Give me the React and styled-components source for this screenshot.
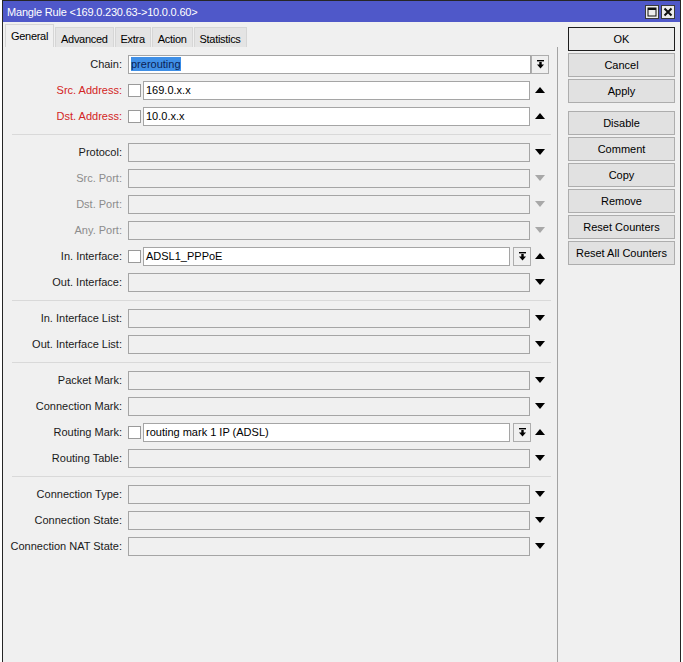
import React from "react";
import styled, { createGlobalStyle } from "styled-components";

const GlobalStyle = createGlobalStyle`
  html, body { margin: 0; padding: 0; background: #ffffff; }
  body { font-family: "Liberation Sans", Arial, sans-serif; font-size: 11px; color: #000; }
  * { box-sizing: border-box; }
`;

const Window = styled.div`
  margin-left: 2px;
  width: 679px;
  height: 662px;
  border: 1px solid #262626;
  border-bottom: none;
  background: #f0f0f0;
  display: flex;
  flex-direction: column;
  overflow: hidden;
`;

const TitleBar = styled.div`
  height: 21px;
  background: #4f58c9;
  display: flex;
  align-items: center;
  padding: 0 5px 0 4px;
  color: #ffffff;
  font-size: 11px;
  letter-spacing: -0.2px;
`;

const TitleText = styled.div`
  flex: 1;
  white-space: nowrap;
`;

const TitleButton = styled.div`
  width: 14px;
  height: 14px;
  margin-left: 2px;
  border: 1px solid #3a3a3a;
  background: #ececec;
  display: flex;
  align-items: center;
  justify-content: center;
`;

const Body = styled.div`
  flex: 1;
  display: flex;
  min-height: 0;
`;

const LeftPane = styled.div`
  width: 555px;
  display: flex;
  flex-direction: column;
`;

const TabStrip = styled.div`
  height: 25px;
  padding: 2px 0 0 2px;
  display: flex;
  align-items: flex-end;
`;

const Tab = styled.div`
  height: ${(p) => (p.$active ? "23px" : "20px")};
  padding: 0 ${(p) => p.$pad}px;
  padding-top: 2px;
  margin-right: 1px;
  display: flex;
  align-items: center;
  background: ${(p) => (p.$active ? "#f0f0f0" : "#e4e4e4")};
  border: 1px solid #d6d6d6;
  border-bottom: none;
  padding-bottom: ${(p) => (p.$active ? "3px" : "0")};
  color: #000;
  white-space: nowrap;
  letter-spacing: -0.3px;
`;

const Form = styled.div`
  flex: 1;
  border-right: 1px solid #a3a3a3;
  padding-top: 4px;
  display: flex;
  flex-direction: column;
`;

const Row = styled.div`
  height: 26px;
  display: grid;
  grid-template-columns: 125px 403px 18px;
  align-items: center;
`;

const Label = styled.div`
  text-align: right;
  padding-right: 6px;
  white-space: nowrap;
  color: ${(p) => (p.$tone === "red" ? "#d32424" : p.$tone === "gray" ? "#8c8c8c" : "#1a1a1a")};
`;

const FieldArea = styled.div`
  display: flex;
  align-items: center;
  gap: 2px;
  height: 19px;
`;

const Box = styled.div`
  flex: 1;
  height: 19px;
  margin-right: ${(p) => (p.$inset ? "0" : "1px")};
  border: 1px solid #a5a5a5;
  background: ${(p) => (p.$filled ? "#ffffff" : "#f0f0f0")};
  display: flex;
  align-items: center;
  padding-left: 2px;
  white-space: nowrap;
  overflow: hidden;
  color: #000;
`;

const Selected = styled.span`
  background: #3f8fe6;
  color: #0c1f55;
  padding: 1px 0;
`;

const Check = styled.div`
  width: 13px;
  height: 13px;
  border: 1px solid #9a9a9a;
  background: #ffffff;
  flex: none;
`;

const DropButton = styled.div`
  width: 18px;
  height: 19px;
  flex: none;
  border: 1px solid #adadad;
  background: #f0f0f0;
  display: flex;
  align-items: center;
  justify-content: center;
`;

const ArrowCell = styled.div`
  display: flex;
  align-items: center;
  justify-content: center;
  height: 19px;
`;

const Separator = styled.div`
  height: 10px;
  margin: 0 6px 0 9px;
  display: flex;
  align-items: center;
  &::after {
    content: "";
    display: block;
    width: 100%;
    height: 1px;
    background: #d9d9d9;
  }
`;

const SidePanel = styled.div`
  width: 122px;
  padding: 5px 0 0 10px;
  display: flex;
  flex-direction: column;
`;

const Button = styled.div`
  width: 107px;
  height: 24px;
  margin-bottom: ${(p) => (p.$gapAfter ? "8px" : "2px")};
  border: 1px solid ${(p) => (p.$default ? "#1e1e1e" : "#adadad")};
  background: ${(p) => (p.$default ? "#ececec" : "#e1e1e1")};
  display: flex;
  align-items: center;
  justify-content: center;
  color: #000;
  white-space: nowrap;
`;

const Triangle = ({ dir, disabled }) => (
  <svg width="10" height="6" viewBox="0 0 10 6">
    <polygon
      points={dir === "up" ? "0,6 5,0 10,6" : "0,0 10,0 5,6"}
      fill={disabled ? "#a8a8a8" : "#000"}
    />
  </svg>
);

const DropIcon = () => (
  <svg width="9" height="9" viewBox="0 0 9 9">
    <rect x="1" y="0" width="7" height="1.4" fill="#000" />
    <rect x="3.3" y="2" width="2.4" height="3" fill="#000" />
    <polygon points="1,4.5 8,4.5 4.5,8.5" fill="#000" />
  </svg>
);

const MaxIcon = () => (
  <svg width="10" height="10" viewBox="0 0 10 10">
    <rect x="1" y="1" width="8" height="8" fill="none" stroke="#111" strokeWidth="1" />
    <rect x="1" y="1" width="8" height="2" fill="#111" />
  </svg>
);

const CloseIcon = () => (
  <svg width="10" height="10" viewBox="0 0 10 10">
    <path d="M1.5 1.5 L8.5 8.5 M8.5 1.5 L1.5 8.5" stroke="#111" strokeWidth="2" />
  </svg>
);

const rows = [
  { label: "Chain", kind: "chain", value: "prerouting" },
  { label: "Src. Address", tone: "red", check: true, value: "169.0.x.x", arrow: "up" },
  { label: "Dst. Address", tone: "red", check: true, value: "10.0.x.x", arrow: "up" },
  "sep",
  { label: "Protocol", arrow: "down" },
  { label: "Src. Port", tone: "gray", arrow: "down", disabled: true },
  { label: "Dst. Port", tone: "gray", arrow: "down", disabled: true },
  { label: "Any. Port", tone: "gray", arrow: "down", disabled: true },
  { label: "In. Interface", check: true, value: "ADSL1_PPPoE", drop: true, arrow: "up" },
  { label: "Out. Interface", arrow: "down" },
  "sep",
  { label: "In. Interface List", arrow: "down" },
  { label: "Out. Interface List", arrow: "down" },
  "sep",
  { label: "Packet Mark", arrow: "down" },
  { label: "Connection Mark", arrow: "down" },
  { label: "Routing Mark", check: true, value: "routing mark 1 IP (ADSL)", drop: true, arrow: "up" },
  { label: "Routing Table", arrow: "down" },
  "sep",
  { label: "Connection Type", arrow: "down" },
  { label: "Connection State", arrow: "down" },
  { label: "Connection NAT State", arrow: "down" },
];

const tabs = [
  { name: "General", pad: 5, active: true },
  { name: "Advanced", pad: 5 },
  { name: "Extra", pad: 5 },
  { name: "Action", pad: 5 },
  { name: "Statistics", pad: 5 },
];

const buttons = [
  { name: "OK", def: true },
  { name: "Cancel" },
  { name: "Apply", gap: true },
  { name: "Disable" },
  { name: "Comment" },
  { name: "Copy" },
  { name: "Remove" },
  { name: "Reset Counters" },
  { name: "Reset All Counters" },
];

function FormRow({ row }) {
  if (row.kind === "chain") {
    return (
      <Row>
        <Label>{row.label}:</Label>
        <FieldArea>
          <Box $filled $inset>
            <Selected>{row.value}</Selected>
          </Box>
        </FieldArea>
        <DropButton>
          <DropIcon />
        </DropButton>
      </Row>
    );
  }
  return (
    <Row>
      <Label $tone={row.tone}>{row.label}:</Label>
      <FieldArea>
        {row.check && <Check />}
        <Box $filled={!!row.value}>{row.value}</Box>
        {row.drop && (
          <DropButton>
            <DropIcon />
          </DropButton>
        )}
      </FieldArea>
      <ArrowCell>
        <Triangle dir={row.arrow} disabled={row.disabled} />
      </ArrowCell>
    </Row>
  );
}

export default function App() {
  return (
    <>
      <GlobalStyle />
      <Window>
        <TitleBar>
          <TitleText>{"Mangle Rule <169.0.230.63->10.0.0.60>"}</TitleText>
          <TitleButton>
            <MaxIcon />
          </TitleButton>
          <TitleButton>
            <CloseIcon />
          </TitleButton>
        </TitleBar>
        <Body>
          <LeftPane>
            <TabStrip>
              {tabs.map((t) => (
                <Tab key={t.name} $active={t.active} $pad={t.pad}>
                  {t.name}
                </Tab>
              ))}
            </TabStrip>
            <Form>
              {rows.map((r, i) =>
                r === "sep" ? <Separator key={i} /> : <FormRow key={i} row={r} />
              )}
            </Form>
          </LeftPane>
          <SidePanel>
            {buttons.map((b) => (
              <Button key={b.name} $default={b.def} $gapAfter={b.gap}>
                {b.name}
              </Button>
            ))}
          </SidePanel>
        </Body>
      </Window>
    </>
  );
}
